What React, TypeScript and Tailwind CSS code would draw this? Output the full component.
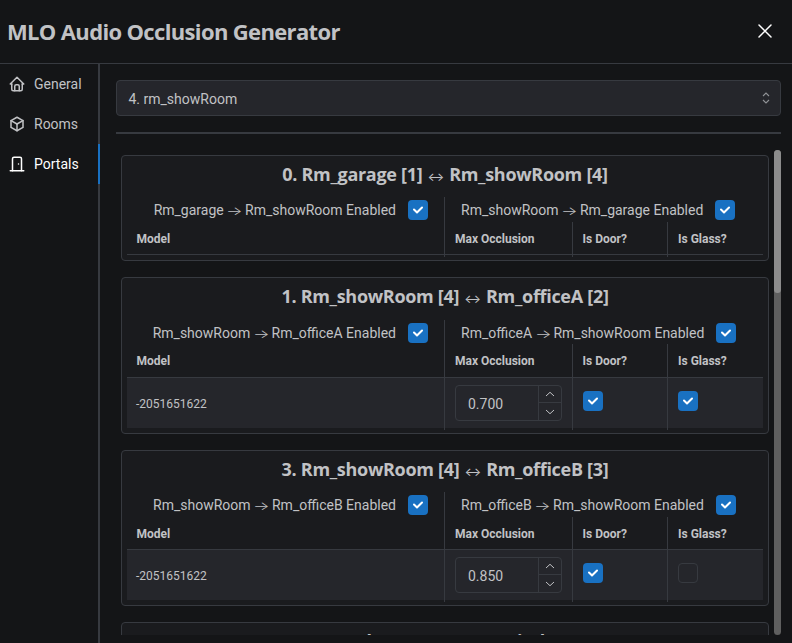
import React from "react";
import { TbHome, TbBox, TbDoor } from "react-icons/tb";

function Check({ checked = true }: { checked?: boolean }) {
  return (
    <span
      className={
        checked
          ? "flex h-5 w-5 shrink-0 items-center justify-center rounded bg-[#1971c2]"
          : "block h-5 w-5 shrink-0 rounded border border-[#373a40] bg-[#25262b]"
      }
    >
      {checked && (
        <svg width="10" height="8" viewBox="0 0 10 7" fill="#fff">
          <path d="M4 4.586L1.707 2.293A1 1 0 1 0 .293 3.707l3 3a.997.997 0 0 0 1.414 0l5-5A1 1 0 1 0 8.293.293L4 4.586z" />
        </svg>
      )}
    </span>
  );
}

function Chevron({ up = false }: { up?: boolean }) {
  return (
    <svg width="10" height="6" viewBox="0 0 10 6" fill="none" stroke="#c1c2c5" strokeWidth="1">
      <path d={up ? "M1 5 5 1.3 9 5" : "M1 1 5 4.7 9 1"} />
    </svg>
  );
}

function Arrow() {
  return <span className="inline-flex w-[14.4px] scale-x-[1.45] justify-center font-[Inter,sans-serif] text-[12px] leading-none font-light">→</span>;
}

type Row = { model: string; max: string; door: boolean; glass: boolean };
type Portal = {
  index: number;
  from: string;
  fromId: number;
  to: string;
  toId: number;
  rows: Row[];
  titleHeight: string;
  enabledHeight: string;
  headHeight: string;
};

const portals: Portal[] = [
  { index: 0, from: "Rm_garage", fromId: 1, to: "Rm_showRoom", toId: 4, rows: [], titleHeight: "h-[41px]", enabledHeight: "h-[25px]", headHeight: "h-[33px]" },
  { index: 1, from: "Rm_showRoom", fromId: 4, to: "Rm_officeA", toId: 2, rows: [{ model: "-2051651622", max: "0.700", door: true, glass: true }], titleHeight: "h-[42px]", enabledHeight: "h-[24px]", headHeight: "h-[34px]" },
  { index: 3, from: "Rm_showRoom", fromId: 4, to: "Rm_officeB", toId: 3, rows: [{ model: "-2051651622", max: "0.850", door: true, glass: false }], titleHeight: "h-[41px]", enabledHeight: "h-[25px]", headHeight: "h-[33px]" },
  { index: 4, from: "Rm_showRoom", fromId: 4, to: "Limbo", toId: 0, rows: [], titleHeight: "h-[41px]", enabledHeight: "h-[25px]", headHeight: "h-[33px]" },
];

const cols = "grid grid-cols-[317px_128px_95px_96px]";

function Card({ p }: { p: Portal }) {
  return (
    <section className="shrink-0 rounded border border-[#373a40] bg-[#1a1b1e] px-[5px] pb-[5px]">
      <h2 className={`${p.titleHeight} pt-[5px] text-center font-['Open_Sans',sans-serif] text-[18px] leading-[27px] font-bold tracking-[-0.3px] whitespace-nowrap`}>
        {p.index}. {p.from} [{p.fromId}]{" "}
        <span className="inline-flex w-[18px] justify-center font-[Inter,sans-serif] text-[12.5px] leading-none font-normal tracking-normal">↔</span>{" "}
        {p.to} [{p.toId}]
      </h2>
      <div className={`${p.enabledHeight} flex text-[14px] leading-[26px] whitespace-nowrap`}>
        <div className="flex w-[317px] items-start justify-end gap-3 pr-4">
          <span>{p.from} <Arrow /> {p.to} Enabled</span>
          <span className="pt-[3px]"><Check /></span>
        </div>
        <div className="flex flex-1 items-start gap-3 border-l border-[#373a40] pl-4">
          <span>{p.to} <Arrow /> {p.from} Enabled</span>
          <span className="pt-[3px]"><Check /></span>
        </div>
      </div>
      <div className={`${cols} ${p.headHeight} border-b border-[#373a40] text-[12px] leading-[35px] font-bold`}>
        <div className="pl-[9.5px]">Model</div>
        <div className="border-l border-[#373a40] pl-[10px]">Max Occlusion</div>
        <div className="border-l border-[#373a40] pl-[9.5px]">Is Door?</div>
        <div className="border-l border-[#373a40] pl-[10px]">Is Glass?</div>
      </div>
      {p.rows.map((r) => (
        <div key={r.model} className={`${cols} h-[50px] bg-[#25262b]`}>
          <div className="pl-[9px] text-[12px] leading-[52px]">{r.model}</div>
          <div className="border-l border-[#373a40] pt-[7px] pl-[10px]">
            <div className="flex h-9 w-[107px] rounded border border-[#373a40]">
              <span className="flex-1 pl-3 text-[14px] leading-[36px]">{r.max}</span>
              <span className="flex w-[23px] flex-col border-l border-[#373a40]">
                <span className="flex h-[17px] items-center justify-center border-b border-[#373a40]"><Chevron up /></span>
                <span className="flex flex-1 items-center justify-center"><Chevron /></span>
              </span>
            </div>
          </div>
          <div className="border-l border-[#373a40] pt-[13px] pl-[10px]"><Check checked={r.door} /></div>
          <div className="border-l border-[#373a40] pt-[13px] pl-[10px]"><Check checked={r.glass} /></div>
        </div>
      ))}
    </section>
  );
}

export default function App() {
  return (
    <div className="flex h-[643px] w-[792px] flex-col overflow-hidden bg-[#141517] font-[Roboto,sans-serif] text-[#c1c2c5]">
      <header className="flex h-16 shrink-0 items-center justify-between border-b border-[#373a40] pr-5 pl-[7px]">
        <h1 className="font-['Open_Sans',sans-serif] text-[22px] font-bold tracking-[-0.65px]">MLO Audio Occlusion Generator</h1>
        <svg className="-mt-0.5" width="14" height="14" viewBox="0 0 14 14" fill="none" stroke="#fff" strokeWidth="1.5" strokeLinecap="round">
          <path d="M1 1 13 13M13 1 1 13" />
        </svg>
      </header>
      <div className="flex min-h-0 flex-1">
        <nav className="w-[100px] border-r-2 border-[#373a40] text-[14px]">
          <div className="flex h-10 items-center gap-2 pl-2"><TbHome size={18} />General</div>
          <div className="flex h-10 items-center gap-2 pl-2"><TbBox size={18} />Rooms</div>
          <div className="-mr-0.5 flex h-10 items-center gap-2 border-r-2 border-[#1971c2] pl-2 text-white"><TbDoor size={18} />Portals</div>
        </nav>
        <main className="flex min-w-0 flex-1 flex-col pt-4 pr-[11px] pb-2 pl-4">
          <div className="flex h-9 shrink-0 items-center justify-between rounded border border-[#373a40] bg-[#25262b] pr-[9px] pl-[11.5px] text-[14px] leading-9">
            <span className="pt-px">4. rm_showRoom</span>
            <svg width="10" height="14" viewBox="0 0 10 14" fill="none" stroke="#909296" strokeWidth="1.1">
              <path d="M2 5 5 2 8 5M2 9l3 3 3-3" />
            </svg>
          </div>
          <div className="mt-4 h-0.5 shrink-0 bg-[#373a40]" />
          <div className="mt-4 flex min-h-0 flex-1 justify-between">
            <div className="flex w-[653px] flex-col gap-4 overflow-hidden pt-[5px] pl-[5px]">
              {portals.map((p) => <Card key={p.index} p={p} />)}
            </div>
            <div className="w-[7px] rounded-full bg-[#5f5f5f]">
              <div className="h-[143px] rounded-full bg-[#8c8c8c]" />
            </div>
          </div>
        </main>
      </div>
    </div>
  );
}
